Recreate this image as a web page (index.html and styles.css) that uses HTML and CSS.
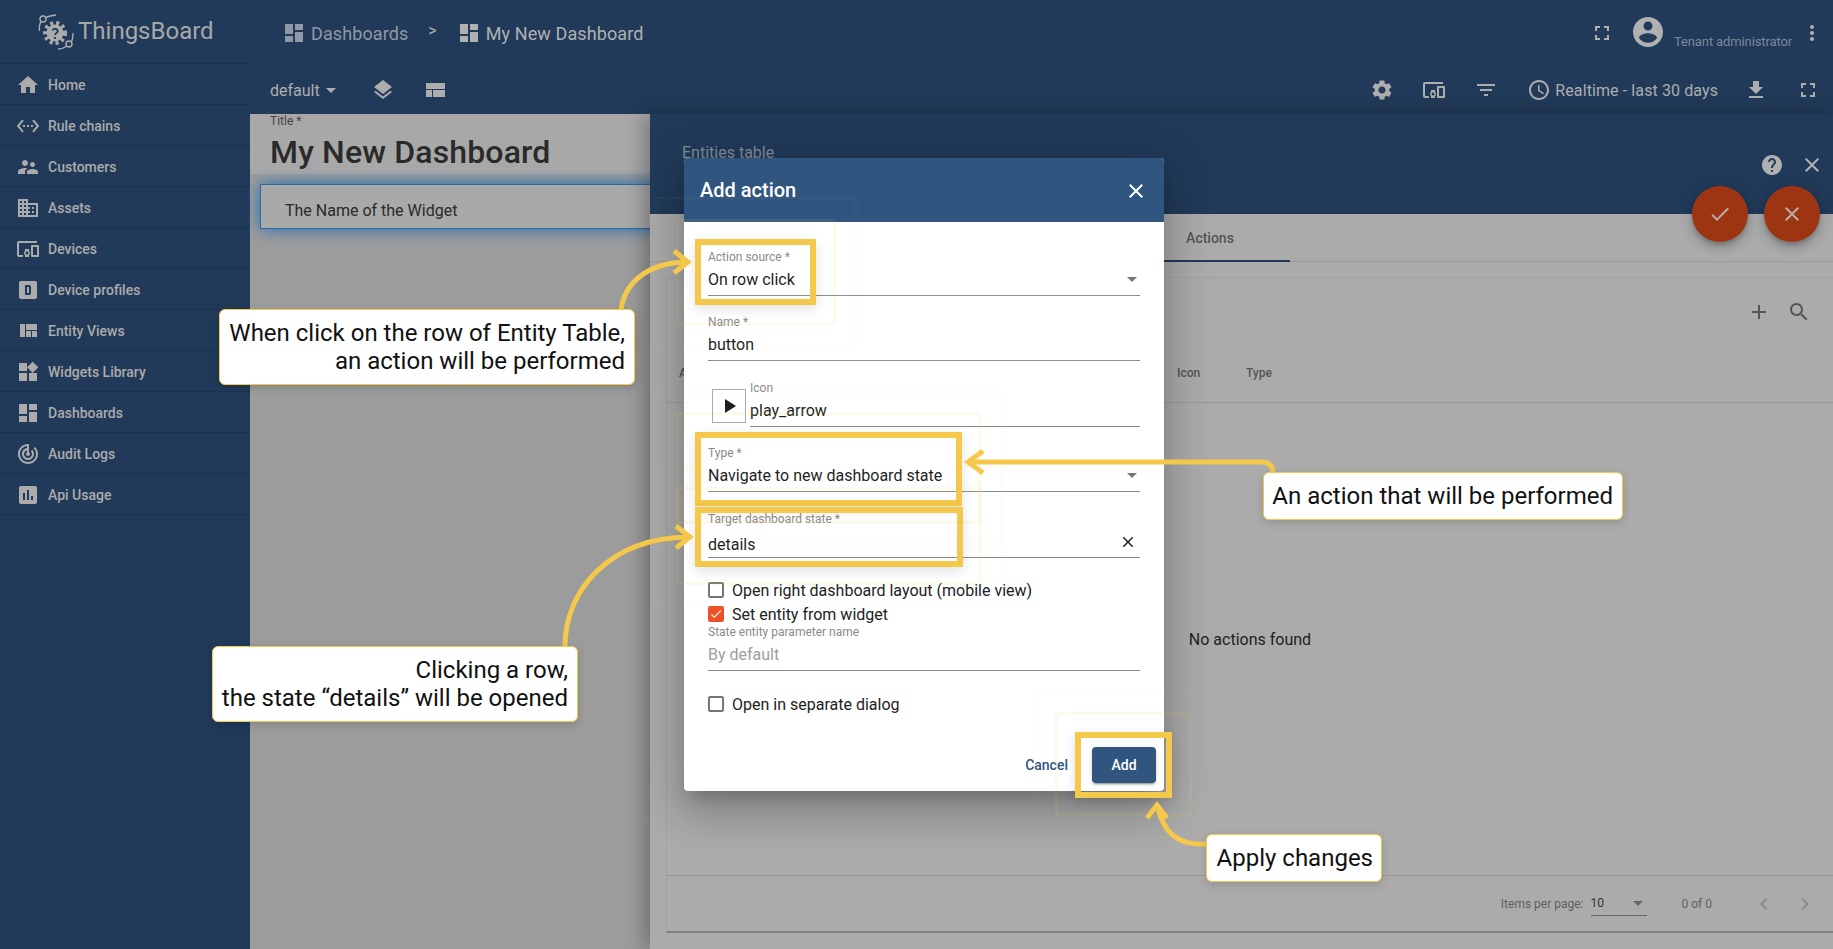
FILE: index.html
```html
<!DOCTYPE html>
<html lang="en">
<head>
<meta charset="utf-8">
<title>ThingsBoard - Add action</title>
<link rel="stylesheet" href="styles.css">
</head>
<body>
<svg class="sprite" aria-hidden="true">
  <symbol id="i-home" viewBox="0 0 24 24"><path d="M10 20v-6h4v6h5v-8h3L12 3 2 12h3v8z"/></symbol>
  <symbol id="i-rule" viewBox="0 0 24 24"><path d="M7.77 6.76L6.23 5.48.82 12l5.41 6.52 1.54-1.28L3.42 12l4.35-5.24zM7 13h2v-2H7v2zm10-2h-2v2h2v-2zm-6 2h2v-2h-2v2zm6.77-7.52l-1.54 1.28L20.58 12l-4.35 5.24 1.54 1.28L23.18 12l-5.41-6.52z"/></symbol>
  <symbol id="i-people" viewBox="0 0 24 24"><path d="M16.5 12c1.38 0 2.49-1.12 2.49-2.5S17.88 7 16.5 7 14 8.12 14 9.5s1.12 2.5 2.5 2.5zM9 11c1.66 0 2.99-1.34 2.99-3S10.66 5 9 5 6 6.34 6 8s1.34 3 3 3zm7.5 3c-1.83 0-5.5.92-5.5 2.75V19h11v-2.25c0-1.83-3.67-2.75-5.5-2.75zM9 13c-2.33 0-7 1.17-7 3.5V19h7v-2.25c0-.85.33-2.34 2.37-3.47C10.5 13.1 9.66 13 9 13z"/></symbol>
  <symbol id="i-domain" viewBox="0 0 24 24"><path d="M12 7V3H2v18h20V7H12zM6 19H4v-2h2v2zm0-4H4v-2h2v2zm0-4H4V9h2v2zm0-4H4V5h2v2zm4 12H8v-2h2v2zm0-4H8v-2h2v2zm0-4H8V9h2v2zm0-4H8V5h2v2zm10 12h-8v-2h2v-2h-2v-2h2v-2h-2V9h8v10zm-2-8h-2v2h2v-2zm0 4h-2v2h2v-2z"/></symbol>
  <symbol id="i-devices" viewBox="0 0 24 24"><path d="M3 6h18V4H3c-1.1 0-2 .9-2 2v12c0 1.1.9 2 2 2h4v-2H3V6zm10 6H9v1.78c-.61.55-1 1.33-1 2.22s.39 1.67 1 2.22V20h4v-1.78c.61-.55 1-1.34 1-2.22s-.39-1.67-1-2.22V12zm-2 5.5c-.83 0-1.5-.67-1.5-1.5s.67-1.5 1.5-1.5 1.5.67 1.5 1.5-.67 1.5-1.5 1.5zM22 8h-6c-.5 0-1 .5-1 1v10c0 .5.5 1 1 1h6c.5 0 1-.5 1-1V9c0-.5-.5-1-1-1zm-1 10h-4v-8h4v8z"/></symbol>
  <symbol id="i-dbox" viewBox="0 0 24 24"><path fill-rule="evenodd" d="M9 7V17H13A2 2 0 0 0 15 15V9A2 2 0 0 0 13 7H9M11 9H13V15H11V9M5 3H19A2 2 0 0 1 21 5V19A2 2 0 0 1 19 21H5A2 2 0 0 1 3 19V5A2 2 0 0 1 5 3Z"/></symbol>
  <symbol id="i-quilt" viewBox="0 0 24 24"><path d="M10 18h5v-6h-5v6zm-6 0h5V5H4v13zm12 0h5v-6h-5v6zM10 5v6h11V5H10z"/></symbol>
  <symbol id="i-widgets" viewBox="0 0 24 24"><path d="M13 13v8h8v-8h-8zM3 21h8v-8H3v8zM3 3v8h8V3H3zm13.66-1.31L11 7.34 16.66 13l5.66-5.66-5.66-5.65z"/></symbol>
  <symbol id="i-dash" viewBox="0 0 24 24"><path d="M3 13h8V3H3v10zm0 8h8v-6H3v6zm10 0h8V11h-8v10zm0-18v6h8V3h-8z"/></symbol>
  <symbol id="i-track" viewBox="0 0 24 24"><path d="M19.07 4.93l-1.41 1.41C19.1 7.79 20 9.79 20 12c0 4.42-3.58 8-8 8s-8-3.58-8-8c0-4.08 3.05-7.44 7-7.93v2.02C8.16 6.57 6 9.03 6 12c0 3.31 2.69 6 6 6s6-2.69 6-6c0-1.66-.67-3.16-1.76-4.24l-1.41 1.41C15.55 9.9 16 10.9 16 12c0 2.21-1.79 4-4 4s-4-1.79-4-4c0-1.86 1.28-3.41 3-3.86v2.14c-.6.35-1 .98-1 1.72 0 1.1.9 2 2 2s2-.9 2-2c0-.74-.4-1.38-1-1.72V2h-1C6.48 2 2 6.48 2 12s4.48 10 10 10 10-4.48 10-10c0-2.76-1.12-5.26-2.93-7.07z"/></symbol>
  <symbol id="i-assess" viewBox="0 0 24 24"><path d="M19 3H5c-1.1 0-2 .9-2 2v14c0 1.1.9 2 2 2h14c1.1 0 2-.9 2-2V5c0-1.1-.9-2-2-2zM9 17H7v-7h2v7zm4 0h-2V7h2v10zm4 0h-2v-4h2v4z"/></symbol>
  <symbol id="i-layers" viewBox="0 0 24 24"><path d="M11.99 18.54l-7.37-5.73L3 14.07l9 7 9-7-1.63-1.27-7.38 5.74zM12 16l7.36-5.73L21 9l-9-7-9 7 1.63 1.27L12 16z"/></symbol>
  <symbol id="i-table" viewBox="0 0 24 24"><path d="M2 5h19v6H2zM2 12h6v7H2zM9 12h12v7H9z"/></symbol>
  <symbol id="i-gear" viewBox="0 0 24 24"><path d="M19.14 12.94c.04-.3.06-.61.06-.94 0-.32-.02-.64-.07-.94l2.03-1.58c.18-.14.23-.41.12-.61l-1.92-3.32c-.12-.22-.37-.29-.59-.22l-2.39.96c-.5-.38-1.03-.7-1.62-.94l-.36-2.54c-.04-.24-.24-.41-.48-.41h-3.84c-.24 0-.43.17-.47.41l-.36 2.54c-.59.24-1.13.57-1.62.94l-2.39-.96c-.22-.08-.47 0-.59.22L2.74 8.87c-.12.21-.08.47.12.61l2.03 1.58c-.05.3-.09.63-.09.94s.02.64.07.94l-2.03 1.58c-.18.14-.23.41-.12.61l1.92 3.32c.12.22.37.29.59.22l2.39-.96c.5.38 1.03.7 1.62.94l.36 2.54c.05.24.24.41.48.41h3.84c.24 0 .44-.17.47-.41l.36-2.54c.59-.24 1.13-.56 1.62-.94l2.39.96c.22.08.47 0 .59-.22l1.92-3.32c.12-.22.07-.47-.12-.61l-2.01-1.58zM12 15.6c-1.98 0-3.6-1.62-3.6-3.6s1.62-3.6 3.6-3.6 3.6 1.62 3.6 3.6-1.62 3.6-3.6 3.6z"/></symbol>
  <symbol id="i-filter" viewBox="0 0 24 24"><path d="M10 18h4v-2h-4v2zM3 6v2h18V6H3zm3 7h12v-2H6v2z"/></symbol>
  <symbol id="i-clock" viewBox="0 0 24 24"><path d="M11.99 2C6.47 2 2 6.48 2 12s4.47 10 9.99 10C17.52 22 22 17.52 22 12S17.52 2 11.99 2zM12 20c-4.42 0-8-3.58-8-8s3.58-8 8-8 8 3.58 8 8-3.58 8-8 8zm.5-13H11v6l5.25 3.15.75-1.23-4.5-2.67z"/></symbol>
  <symbol id="i-down" viewBox="0 0 24 24"><path d="M19 9h-4V3H9v6H5l7 7 7-7zM5 18v2h14v-2H5z"/></symbol>
  <symbol id="i-full" viewBox="0 0 24 24"><path d="M7 14H5v5h5v-2H7v-3zm-2-4h2V7h3V5H5v5zm12 7h-3v2h5v-5h-2v3zM14 5v2h3v3h2V5h-5z"/></symbol>
  <symbol id="i-account" viewBox="0 0 24 24"><path d="M12 2C6.48 2 2 6.48 2 12s4.48 10 10 10 10-4.48 10-10S17.52 2 12 2zm0 3c1.66 0 3 1.34 3 3s-1.34 3-3 3-3-1.34-3-3 1.34-3 3-3zm0 14.2c-2.5 0-4.71-1.28-6-3.22.03-1.99 4-3.08 6-3.08 1.99 0 5.97 1.09 6 3.08-1.29 1.94-3.5 3.22-6 3.22z"/></symbol>
  <symbol id="i-more" viewBox="0 0 24 24"><path d="M12 8c1.1 0 2-.9 2-2s-.9-2-2-2-2 .9-2 2 .9 2 2 2zm0 2c-1.1 0-2 .9-2 2s.9 2 2 2 2-.9 2-2-.9-2-2-2zm0 6c-1.1 0-2 .9-2 2s.9 2 2 2 2-.9 2-2-.9-2-2-2z"/></symbol>
  <symbol id="i-help" viewBox="0 0 24 24"><path d="M12 2C6.48 2 2 6.48 2 12s4.48 10 10 10 10-4.48 10-10S17.52 2 12 2zm1 17h-2v-2h2v2zm2.07-7.75l-.9.92C13.45 12.9 13 13.5 13 15h-2v-.5c0-1.1.45-2.1 1.17-2.83l1.24-1.26c.37-.36.59-.86.59-1.41 0-1.1-.9-2-2-2s-2 .9-2 2H8c0-2.21 1.79-4 4-4s4 1.79 4 4c0 .88-.36 1.68-.93 2.25z"/></symbol>
  <symbol id="i-close" viewBox="0 0 24 24"><path d="M19 6.41L17.59 5 12 10.59 6.41 5 5 6.41 10.59 12 5 17.59 6.41 19 12 13.41 17.59 19 19 17.59 13.41 12z"/></symbol>
  <symbol id="i-check" viewBox="0 0 24 24"><path d="M9 16.17L4.83 12l-1.42 1.41L9 19 21 7l-1.41-1.41z"/></symbol>
  <symbol id="i-add" viewBox="0 0 24 24"><path d="M19 13h-6v6h-2v-6H5v-2h6V5h2v6h6v2z"/></symbol>
  <symbol id="i-search" viewBox="0 0 24 24"><path d="M15.5 14h-.79l-.28-.27C15.41 12.59 16 11.11 16 9.5 16 5.91 13.09 3 9.5 3S3 5.91 3 9.5 5.91 16 9.5 16c1.61 0 3.09-.59 4.23-1.57l.27.28v.79l5 4.99L20.49 19l-4.99-5zm-6 0C7.01 14 5 11.99 5 9.5S7.01 5 9.5 5 14 7.01 14 9.5 11.99 14 9.5 14z"/></symbol>
  <symbol id="i-left" viewBox="0 0 24 24"><path d="M15.41 7.41L14 6l-6 6 6 6 1.41-1.41L10.83 12z"/></symbol>
  <symbol id="i-right" viewBox="0 0 24 24"><path d="M10 6L8.59 7.41 13.17 12l-4.58 4.59L10 18l6-6z"/></symbol>
  <symbol id="i-play" viewBox="0 0 24 24"><path d="M8 5v14l11-7z"/></symbol>
</svg>

<div class="app">
  <aside class="sidebar">
    <div class="brand">
      <svg class="brand-mark" viewBox="0 0 40 40">
        <circle class="bm-teeth" cx="18" cy="21" r="10"/>
        <circle class="bm-core" cx="18" cy="21" r="8.500"/>
        <path class="bm-q" d="M15.500 18.500c.6-2.400 5.400-2.200 5.200.6-.1 1.700-2.600 1.900-2.600 4M18 25v2"/>
        <path class="bm-arc" d="M2.500 19C2 15 3 11 4.500 9.500M9 5.500C12 4 15 3.500 19 3M36 21C36 26 35 29 34 30M30 34C27 36 24 37 21 37"/>
        <circle class="bm-ring" cx="6" cy="7" r="3"/>
        <circle class="bm-ring" cx="32" cy="32" r="3"/>
      </svg>
      <span class="brand-name">ThingsBoard</span>
    </div>
    <nav class="nav">
      <a class="nav-item"><svg class="ico"><use href="#i-home"/></svg>Home</a>
      <a class="nav-item"><svg class="ico"><use href="#i-rule"/></svg>Rule chains</a>
      <a class="nav-item"><svg class="ico"><use href="#i-people"/></svg>Customers</a>
      <a class="nav-item"><svg class="ico"><use href="#i-domain"/></svg>Assets</a>
      <a class="nav-item"><svg class="ico"><use href="#i-devices"/></svg>Devices</a>
      <a class="nav-item"><svg class="ico"><use href="#i-dbox"/></svg>Device profiles</a>
      <a class="nav-item"><svg class="ico"><use href="#i-quilt"/></svg>Entity Views</a>
      <a class="nav-item"><svg class="ico"><use href="#i-widgets"/></svg>Widgets Library</a>
      <a class="nav-item"><svg class="ico"><use href="#i-dash"/></svg>Dashboards</a>
      <a class="nav-item"><svg class="ico"><use href="#i-track"/></svg>Audit Logs</a>
      <a class="nav-item"><svg class="ico"><use href="#i-assess"/></svg>Api Usage</a>
    </nav>
  </aside>

  <main class="main">
    <header class="topbar">
      <svg class="ico ico-dim"><use href="#i-dash"/></svg>
      <span class="crumb crumb-dim">Dashboards</span>
      <span class="crumb-sep">&gt;</span>
      <svg class="ico"><use href="#i-dash"/></svg>
      <span class="crumb">My New Dashboard</span>
      <div class="topbar-right">
        <svg class="ico"><use href="#i-full"/></svg>
        <svg class="ico-account"><use href="#i-account"/></svg>
        <span class="tenant">Tenant administrator</span>
        <svg class="ico"><use href="#i-more"/></svg>
      </div>
    </header>
    <div class="toolbar">
      <span class="state">default</span><span class="state-caret"></span>
      <svg class="ico ico-layers"><use href="#i-layers"/></svg>
      <svg class="ico ico-table"><use href="#i-table"/></svg>
      <div class="toolbar-right">
        <svg class="ico"><use href="#i-gear"/></svg>
        <svg class="ico"><use href="#i-devices"/></svg>
        <svg class="ico"><use href="#i-filter"/></svg>
        <div class="timewindow"><svg class="ico"><use href="#i-clock"/></svg><span>Realtime - last 30 days</span></div>
        <svg class="ico ico-download"><use href="#i-down"/></svg>
        <svg class="ico"><use href="#i-full"/></svg>
      </div>
    </div>
    <section class="content">
      <div class="title-band">
        <div class="title-label">Title *</div>
        <div class="title-value">My New Dashboard</div>
      </div>
      <div class="widget-head">The Name of the Widget</div>
    </section>
  </main>
</div>

<section class="drawer">
  <div class="drawer-head">
    <span class="drawer-title">Entities table</span>
    <div class="drawer-actions">
      <svg class="ico"><use href="#i-help"/></svg>
      <svg class="ico"><use href="#i-close"/></svg>
    </div>
  </div>
  <div class="tabs"><span class="tab">Actions</span></div>
  <div class="card">
    <div class="card-tools">
      <svg class="ico"><use href="#i-add"/></svg>
      <svg class="ico"><use href="#i-search"/></svg>
    </div>
    <div class="table-head">
      <span class="th-source">Action source</span>
      <span class="th-icon">Icon</span>
      <span>Type</span>
    </div>
    <div class="table-empty">No actions found</div>
    <div class="paginator">
      <span class="pg-label">Items per page:</span>
      <span class="pg-select">10<i class="pg-caret"></i></span>
      <span class="pg-range">0 of 0</span>
      <svg class="ico"><use href="#i-left"/></svg>
      <svg class="ico"><use href="#i-right"/></svg>
    </div>
  </div>
</section>

<button class="fab fab-ok"><svg class="ico"><use href="#i-check"/></svg></button>
<button class="fab fab-no"><svg class="ico"><use href="#i-close"/></svg></button>

<div class="dialog">
  <div class="dialog-head">
    <h2 class="dialog-title">Add action</h2>
    <svg class="ico"><use href="#i-close"/></svg>
  </div>
  <div class="dialog-body">
    <div class="field">
      <div class="field-label">Action source *</div>
      <div class="field-value field-select">On row click</div>
    </div>
    <div class="field field-name">
      <div class="field-label">Name *</div>
      <div class="field-value">button</div>
    </div>
    <div class="icon-row">
      <span class="icon-box"><svg class="ico"><use href="#i-play"/></svg></span>
      <div class="field field-icon">
        <div class="field-label">Icon</div>
        <div class="field-value">play_arrow</div>
      </div>
    </div>
    <div class="field field-type">
      <div class="field-label">Type *</div>
      <div class="field-value field-select">Navigate to new dashboard state</div>
    </div>
    <div class="field field-target">
      <div class="field-label">Target dashboard state *</div>
      <div class="field-value field-clear">details<svg class="ico-clear"><use href="#i-close"/></svg></div>
    </div>
    <label class="check check-first"><span class="box"></span>Open right dashboard layout (mobile view)</label>
    <label class="check check-second"><span class="box box-on"><svg viewBox="0 0 24 24"><path d="M9 16.170L4.830 12l-1.420 1.410L9 19 21 7l-1.410-1.410z"/></svg></span>Set entity from widget</label>
    <div class="field field-state">
      <div class="field-label">State entity parameter name</div>
      <div class="field-value field-placeholder">By default</div>
    </div>
    <label class="check check-third"><span class="box"></span>Open in separate dialog</label>
    <div class="dialog-actions">
      <button class="btn-text">Cancel</button>
      <button class="btn-primary">Add</button>
    </div>
  </div>
</div>

<div class="halo halo-a1"></div><div class="halo-far halo-a2"></div>
<div class="halo halo-t1"></div><div class="halo-far halo-t2"></div>
<div class="halo halo-d1"></div><div class="halo-far halo-d2"></div>
<div class="halo halo-b1"></div><div class="halo-far halo-b2"></div>

<div class="mark mark-source"></div>
<div class="mark mark-type"></div>
<div class="mark mark-target"></div>
<div class="mark mark-add"></div>

<svg class="arrows" viewBox="0 0 1833 949">
  <path d="M621 310C624 285 645 263 686 262"/>
  <polyline points="674,251 688,262 674,273"/>
  <path d="M565 646C565 590 610 538 688 537"/>
  <polyline points="676,526 690,537 676,548"/>
  <path d="M970 462H1261Q1273 462 1273 473"/>
  <polyline points="983,451 968,462 983,473"/>
  <path d="M1207 844C1181 846 1164 835 1158 808"/>
  <polyline points="1147,818 1157,805 1167,818"/>
</svg>

<div class="note note-row">When click on the row of Entity Table,<br>an action will be performed</div>
<div class="note note-state">Clicking a row,<br>the state “details” will be opened</div>
<div class="note note-action">An action that will be performed</div>
<div class="note note-apply">Apply changes</div>
</body>
</html>
```
FILE: styles.css
```css
* { box-sizing: border-box; }
html, body { margin: 0; height: 100%; }
body {
  position: relative;
  width: 100vw;
  height: 100vh;
  overflow: hidden;
  font-family: Roboto, "Noto Sans", sans-serif;
  background: #9c9c9c;
  color: #222;
}
.sprite { display: none; }
.ico { width: 24px; height: 24px; fill: currentColor; flex: none; display: block; }

.app { display: grid; grid-template-columns: 250px 1fr; height: 100%; }

/* Sidebar */
.sidebar { background: #213a59; color: #ababab; }
.brand { height: 64px; display: flex; align-items: center; padding-left: 37px; border-bottom: 1px solid #1c3350; }
.brand-mark { width: 40px; height: 40px; flex: none; }
.bm-teeth { fill: none; stroke: #ababab; stroke-width: 4; stroke-dasharray: 3 3; }
.bm-core { fill: #ababab; }
.bm-q { fill: none; stroke: #213a59; stroke-width: 1.8; }
.bm-arc { fill: none; stroke: #ababab; stroke-width: 1.4; }
.bm-ring { fill: #213a59; stroke: #ababab; stroke-width: 1.4; }
.brand-name { font-size: 24px; margin-left: 1px; margin-top: -1px; color: #a8a8a8; }
.nav { display: flex; flex-direction: column; }
.nav-item {
  height: 41px;
  display: flex;
  align-items: center;
  gap: 8px;
  padding: 1px 0 0 16px;
  font-size: 14px;
  font-weight: 500;
  border-bottom: 1px solid #1c3350;
}

/* Main */
.main { display: flex; flex-direction: column; min-width: 0; }
.topbar { height: 64px; background: #213a59; color: #b0b0b0; display: flex; align-items: center; padding: 2px 9px 0 32px; }
.ico-dim { color: #8f98a5; }
.crumb { font-size: 18px; margin-left: 5px; letter-spacing: .1px; }
.crumb-dim { color: #8f98a5; }
.crumb-sep { font-size: 16px; margin: -6px 20px 0 20px; }
.topbar-right { margin-left: auto; display: flex; align-items: center; }
.ico-account { width: 36px; height: 36px; fill: currentColor; margin-left: 16px; margin-top: -2px; }
.tenant { font-size: 13px; letter-spacing: -.12px; color: #7b8999; margin-left: 8px; margin-right: 8px; margin-top: 16px; }
.toolbar { height: 50px; background: #213a59; color: #adadad; display: flex; align-items: center; padding: 2px 13px 0 20px; }
.state { font-size: 16px; }
.state-caret { border: 5px solid transparent; border-top-color: #adadad; border-bottom: 0; margin-left: 6px; }
.ico-layers { margin-left: 35px; }
.ico-table { margin-left: 29px; }
.toolbar-right { margin-left: auto; display: flex; align-items: center; gap: 28px; }
.ico-download { margin-left: -2px; }
.timewindow { display: flex; align-items: center; gap: 4px; margin-left: 1px; font-size: 16px; letter-spacing: .1px; }

.content { flex: 1; background: #9c9c9c; }
.title-band { height: 60px; background: #a8a8a8; padding-left: 20px; overflow: hidden; }
.title-label { font-size: 12px; line-height: 14px; color: #444; }
.title-value { font-size: 32px; font-weight: 500; line-height: 38px; margin-top: 5px; letter-spacing: .15px; color: #2a2a2a; }
.widget-head {
  margin: 10px 0 0 10px;
  height: 45px;
  background: #a9a9a9;
  border: 1px solid #2a6a9f;
  box-shadow: 0 0 16px rgba(30, 110, 180, 1);
  padding: 0 0 0 24px;
  line-height: 51px;
  font-size: 16px;
  color: #2a2a2a;
}

/* Drawer */
.drawer {
  position: absolute;
  left: 650px; top: 114px; right: 0; bottom: 0;
  background: #ababab;
  box-shadow: -6px 0 18px rgba(0, 0, 0, .28);
  display: flex;
  flex-direction: column;
}
.drawer-head { height: 100px; background: #213a59; display: flex; justify-content: space-between; padding: 30px 9px 0 32px; color: #b0b0b0; }
.drawer-title { font-size: 16px; line-height: 18px; color: #808a97; }
.drawer-actions { display: flex; gap: 16px; margin-top: 9px; height: 24px; }
.tabs { height: 48px; border-bottom: 1px solid #9b9b9b; padding-left: 480px; }
.tab {
  display: block;
  width: 160px;
  height: 48px;
  line-height: 48px;
  text-align: center;
  font-size: 14px;
  font-weight: 500;
  color: #555;
  border-bottom: 2px solid #213a59;
}
.card {
  flex: 1;
  margin: 15px 0 16px 16px;
  border: 1px solid #a2a2a2;
  border-right: 0;
  border-bottom: 2px solid #808080;
  display: flex;
  flex-direction: column;
  min-height: 0;
}
.card-tools { height: 68px; display: flex; justify-content: flex-end; align-items: center; gap: 16px; padding-right: 22px; color: #555; }
.table-head {
  height: 57px;
  display: flex;
  align-items: center;
  padding: 0 0 3px 12px;
  font-size: 12px;
  font-weight: 500;
  color: #555;
  border-bottom: 1px solid #999;
}
.th-source { width: 498px; }
.th-icon { width: 69px; }
.table-empty { flex: 1; display: flex; align-items: center; justify-content: center; padding-top: 1px; font-size: 16px; color: #222; }
.paginator {
  height: 56px;
  display: flex;
  align-items: center;
  justify-content: flex-end;
  padding-right: 16px;
  border-top: 1px solid #999;
  font-size: 12px;
  color: #5f5f5f;
}
.pg-select { width: 56px; height: 24px; margin-left: 7px; line-height: 22px; border-bottom: 1px solid #666; color: #333; display: flex; justify-content: space-between; align-items: center; padding-right: 4px; }
.pg-caret { border: 5px solid transparent; border-top-color: #666; border-bottom: 0; }
.pg-range { margin: 0 40px 0 35px; }
.paginator .ico { color: #8a8a8a; }
.paginator .ico + .ico { margin-left: 17px; }

/* FABs */
.fab {
  position: absolute;
  top: 186px;
  width: 56px; height: 56px;
  border: 0; border-radius: 50%;
  padding: 16px;
  background: #9d3512;
  color: #b9aba5;
  box-shadow: 0 3px 5px -1px rgba(0,0,0,.2), 0 6px 10px rgba(0,0,0,.14), 0 1px 18px rgba(0,0,0,.12);
}
.fab-ok { left: 1692px; }
.fab-no { left: 1764px; }

/* Dialog */
.dialog {
  position: absolute;
  left: 684px; top: 158px;
  width: 480px; height: 633px;
  background: #fff;
  border-radius: 4px;
  overflow: hidden;
  box-shadow: 0 11px 15px -7px rgba(0,0,0,.2), 0 24px 38px 3px rgba(0,0,0,.14), 0 9px 46px 8px rgba(0,0,0,.12);
}
.dialog-head { height: 64px; background: #305680; color: #fff; display: flex; align-items: center; justify-content: space-between; padding: 2px 16px 0 16px; }
.dialog-title { margin: -2px 0 0; font-size: 20px; font-weight: 500; }
.dialog-body { padding: 28px 24px 0; }
.field { border-bottom: 1px solid #8c8c8c; height: 46px; }
.field-label { font-size: 12px; line-height: 14px; color: #8a8a8a; }
.field-value { margin-top: 5px; font-size: 16px; line-height: 22px; color: #1f1f1f; }
.field-select { position: relative; }
.field-select::after {
  content: "";
  position: absolute;
  right: 3px; top: 8px;
  border: 5px solid transparent;
  border-top-color: #757575;
  border-bottom: 0;
}
.field-name { margin-top: 19px; }
.icon-row { display: flex; margin-top: 20px; padding-left: 4px; }
.icon-box { width: 34px; height: 34px; margin-top: 8px; border: 1px solid #aaa; padding: 4px; color: #1f1f1f; flex: none; }
.field-icon { flex: 1; margin-left: 4px; }
.field-type { margin-top: 19px; }
.field-target { margin-top: 20px; }
.field-clear { margin-top: 8px; display: flex; justify-content: space-between; align-items: center; padding-right: 3px; }
.ico-clear { width: 18px; height: 18px; fill: #222; margin-top: -6px; }
.check { display: flex; align-items: center; gap: 8px; height: 16px; font-size: 16px; color: #222; }
.check-first { margin-top: 24px; }
.check-second { margin-top: 8px; }
.check-third { margin-top: 25px; }
.box { width: 16px; height: 16px; border: 2px solid #757575; border-radius: 2px; flex: none; }
.box-on { background: #ef5126; border: 0; padding: 1px; }
.box-on svg { width: 14px; height: 14px; fill: #fff; display: block; }
.field-state { margin-top: 3px; }
.field-placeholder { color: #9e9e9e; }
.dialog-actions { display: flex; justify-content: flex-end; align-items: center; gap: 8px; margin: 35px -16px 0 0; }
.btn-text { border: 0; background: none; font: 500 14px Roboto, sans-serif; color: #305680; padding: 0 16px 0 8px; height: 36px; }
.btn-primary {
  width: 64px; height: 36px;
  border: 0; border-radius: 4px;
  background: #305680;
  color: #fff;
  font: 500 14px Roboto, sans-serif;
  box-shadow: 0 3px 1px -2px rgba(0,0,0,.2), 0 2px 2px rgba(0,0,0,.14), 0 1px 5px rgba(0,0,0,.12);
}

/* Overlay annotations */
.halo, .halo-far, .mark, .note, .arrows { position: absolute; }
.halo { border: 3px solid rgba(244, 200, 74, .1); }
.halo-far { border: 2px solid rgba(244, 200, 74, .035); }
.halo-a1 { left: 676px; top: 219px; width: 160px; height: 106px; }
.halo-a2 { left: 655px; top: 197px; width: 202px; height: 149px; }
.halo-t1 { left: 676px; top: 412px; width: 305px; height: 112px; }
.halo-t2 { left: 655px; top: 391px; width: 348px; height: 154px; }
.halo-d1 { left: 676px; top: 487px; width: 306px; height: 98px; }
.halo-d2 { left: 655px; top: 466px; width: 348px; height: 142px; }
.halo-b1 { left: 1055px; top: 712px; width: 137px; height: 105px; }
.halo-b2 { left: 1036px; top: 692px; width: 176px; height: 146px; }

.mark { border: 6px solid #f4c84a; box-shadow: 0 4px 12px rgba(0, 0, 0, .12); }
.mark-source { left: 695px; top: 239px; width: 121px; height: 66px; }
.mark-type { left: 695px; top: 432px; width: 267px; height: 74px; }
.mark-target { left: 695px; top: 507px; width: 268px; height: 60px; }
.mark-add { left: 1075px; top: 732px; width: 97px; height: 66px; }

.arrows { left: 0; top: 0; width: 1833px; height: 949px; fill: none; stroke: #f4c84a; stroke-width: 5; pointer-events: none; }

.note {
  background: #fff;
  border: 1.5px solid #f4c84a;
  border-radius: 6px;
  font-size: 24px;
  line-height: 28px;
  color: #111;
  text-align: right;
  box-shadow: 0 3px 8px rgba(0, 0, 0, .15);
  white-space: nowrap;
}
.note-row { left: 219px; top: 309px; width: 416px; height: 76px; padding: 9px 9px 0 0; }
.note-state { left: 212px; top: 646px; width: 366px; height: 76px; padding: 9px 9px 0 0; }
.note-action { left: 1263px; top: 472px; width: 360px; height: 48px; padding: 9px 9px 0 0; }
.note-apply { left: 1206px; top: 834px; width: 176px; height: 48px; padding: 9px 8px 0 0; }
```
